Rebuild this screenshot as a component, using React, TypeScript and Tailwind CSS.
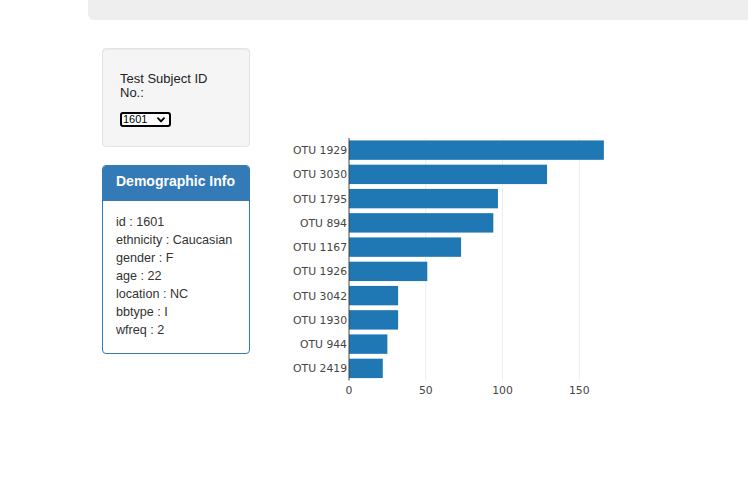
import React from 'react';

interface Sample {
  label: string;
  value: number;
}

const samples: Sample[] = [
  { label: 'OTU 1929', value: 166 },
  { label: 'OTU 3030', value: 129 },
  { label: 'OTU 1795', value: 97 },
  { label: 'OTU 894', value: 94 },
  { label: 'OTU 1167', value: 73 },
  { label: 'OTU 1926', value: 51 },
  { label: 'OTU 3042', value: 32 },
  { label: 'OTU 1930', value: 32 },
  { label: 'OTU 944', value: 25 },
  { label: 'OTU 2419', value: 22 },
];

const metadata: [string, string][] = [
  ['id', '1601'],
  ['ethnicity', 'Caucasian'],
  ['gender', 'F'],
  ['age', '22'],
  ['location', 'NC'],
  ['bbtype', 'I'],
  ['wfreq', '2'],
];

// chart geometry, in page coordinates (the svg viewBox matches the page)
const X0 = 349;
const SCALE = 1.5353;
const TOP = 138;
const BOTTOM = 380.5;
const BAND = (BOTTOM - TOP) / samples.length;

function BarChart() {
  return (
    <svg width={498} height={370} viewBox="250 48 498 370" className="shrink-0">
      {[50, 100, 150].map((t) => (
        <line
          key={t}
          x1={X0 + t * SCALE}
          x2={X0 + t * SCALE}
          y1={TOP}
          y2={BOTTOM}
          stroke="#eeeeee"
          strokeWidth={1}
        />
      ))}
      {samples.map((s, i) => {
        const y = TOP + BAND * i + BAND * 0.1;
        return (
          <g key={s.label}>
            <rect x={X0} y={y} width={s.value * SCALE} height={BAND * 0.8} fill="#1f77b4" />
            <text
              x={347}
              y={TOP + BAND * (i + 0.5) + 4}
              textAnchor="end"
              fontSize={10.8}
              fill="#444"
              style={{ fontFamily: '"DejaVu Sans", Verdana, sans-serif' }}
            >
              {s.label}
            </text>
          </g>
        );
      })}
      <line x1={X0} x2={X0} y1={TOP} y2={BOTTOM} stroke="#444" strokeWidth={1} />
      {[0, 50, 100, 150].map((t) => (
        <text
          key={t}
          x={X0 + t * SCALE}
          y={393.5}
          textAnchor="middle"
          fontSize={10.8}
          fill="#444"
          style={{ fontFamily: '"DejaVu Sans", Verdana, sans-serif' }}
        >
          {t}
        </text>
      ))}
    </svg>
  );
}

export default function App() {
  return (
    <div className="min-h-screen bg-white text-[#333] font-['Liberation_Sans',Arial,sans-serif] overflow-hidden">
      {/* Jumbotron (scrolled off the top) */}
      <div className="ml-[88px] h-[20px] bg-[#eeeeee] rounded-bl-[6px]" />

      <div className="flex pl-[102px] pt-[28px]">
        <div className="w-[148px] shrink-0 flex flex-col">
          {/* Well */}
          <div className="h-[99px] bg-[#f5f5f5] border border-[#e3e3e3] rounded-[4px] shadow-[inset_0_1px_1px_rgba(0,0,0,0.05)] pl-[17px] pt-[23px]">
            <h5 className="text-[13px] leading-[14px] w-[100px] text-[#222]">Test Subject ID No.:</h5>
            <div className="relative mt-[12px] w-[51px] h-[15px] leading-none">
              <select
                defaultValue="1601"
                className="block appearance-none w-full h-[15px] border-2 border-black rounded-[3px] bg-white text-black text-[11px] leading-[11px] p-0 pl-[1px] outline-none"
              >
                <option value="1601">1601</option>
              </select>
              <svg
                className="absolute left-[37px] top-[5px] pointer-events-none"
                width={8}
                height={6}
                viewBox="0 0 8 6"
                fill="none"
              >
                <path d="M1 1.2 L4 4.4 L7 1.2" stroke="black" strokeWidth={1.9} strokeLinecap="round" strokeLinejoin="round" />
              </svg>
            </div>
          </div>

          {/* Demographic panel */}
          <div className="mt-[18px] border border-[#337ab7] rounded-[4px] overflow-hidden bg-white">
            <div className="h-[35px] bg-[#337ab7] pl-[13px] pt-[7px]">
              <h3 className="text-white font-bold text-[14px] leading-[16px]">Demographic Info</h3>
            </div>
            <div className="pl-[13px] pt-[12px] pb-[14px] text-[12.6px] leading-[18px]">
              {metadata.map(([k, v]) => (
                <div key={k}>
                  {k} : {v}
                </div>
              ))}
            </div>
          </div>
        </div>

        <BarChart />
      </div>
    </div>
  );
}
